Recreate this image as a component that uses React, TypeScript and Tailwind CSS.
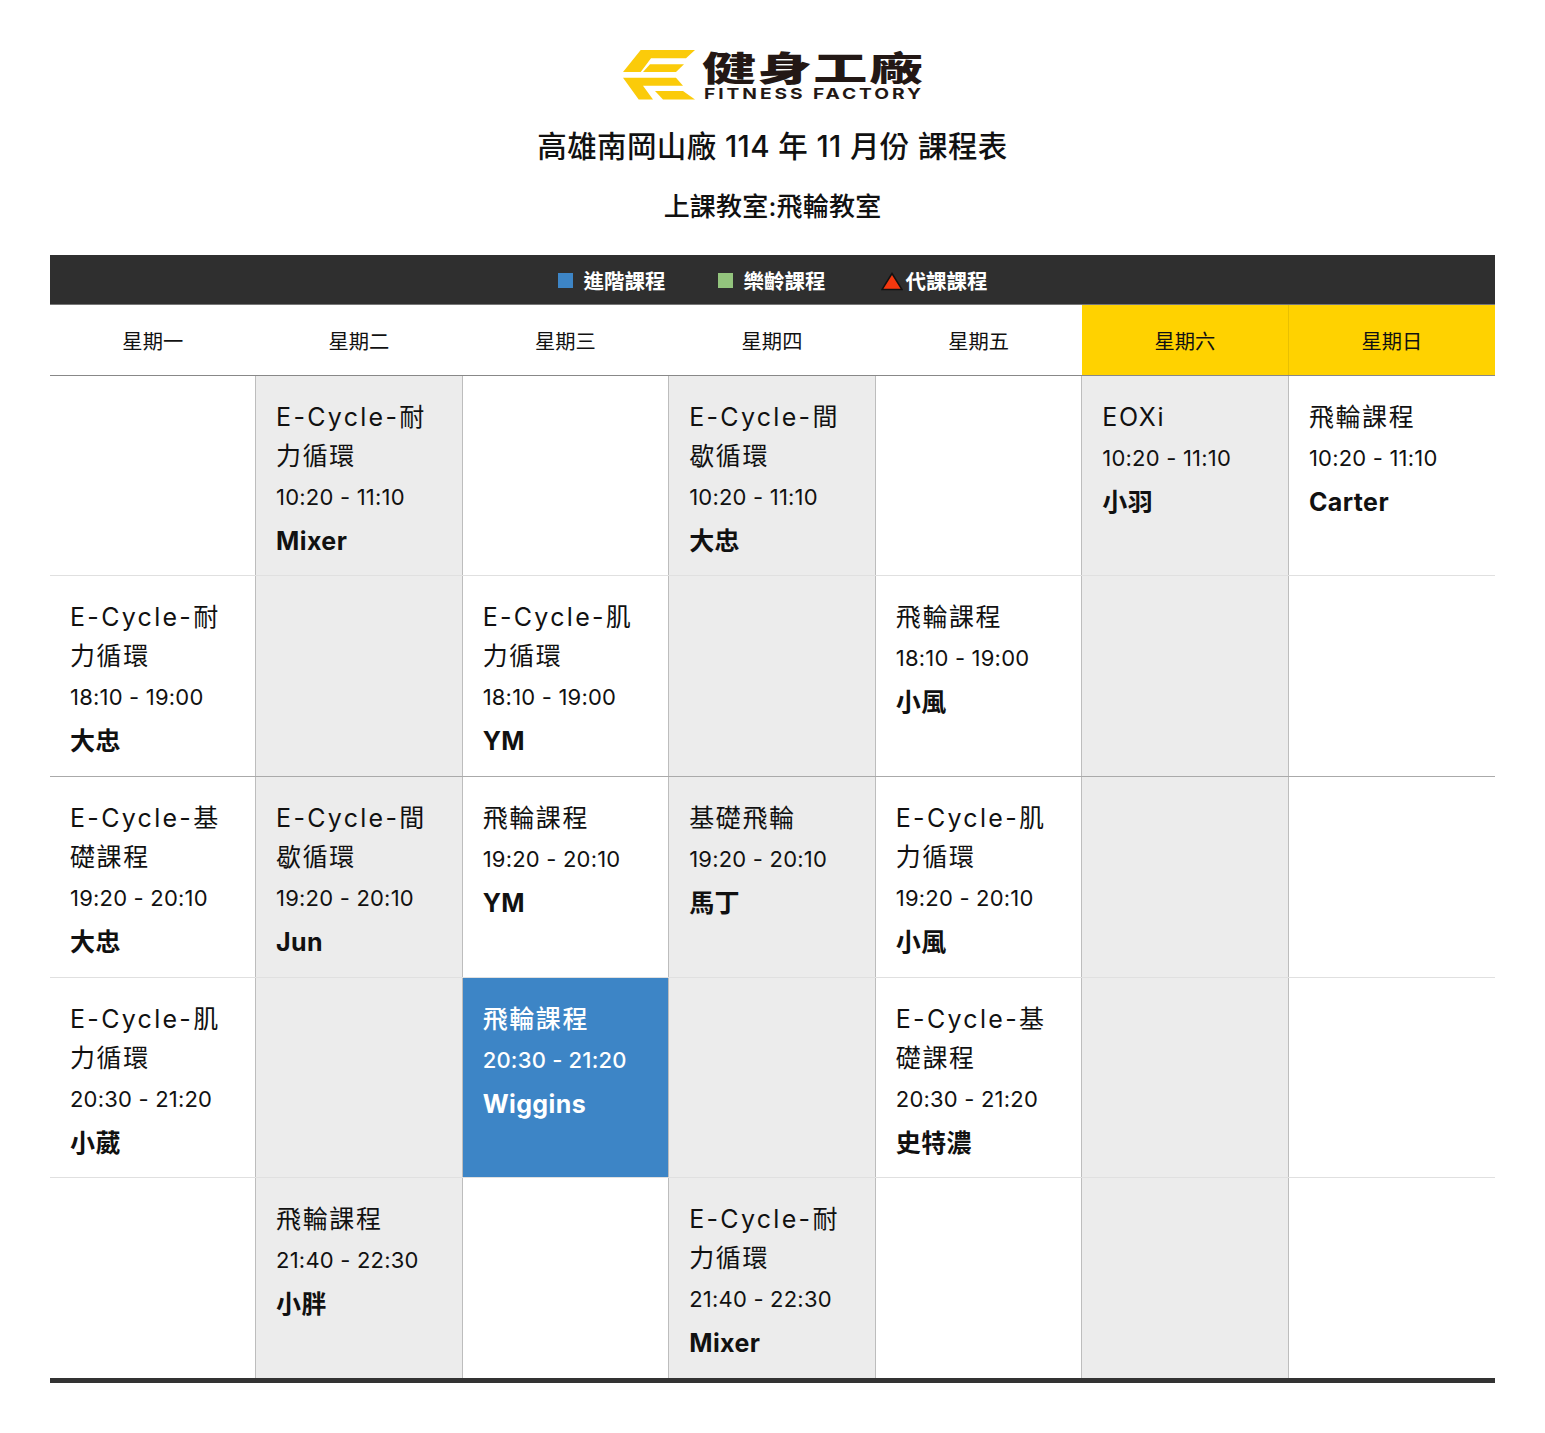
const F = "font-['Inter','Noto_Sans_CJK_TC',sans-serif]";

type C = { t: string; h: string; n: string; blue?: boolean } | null;

const rows: C[][] = [
  [null, { t: "E-Cycle-耐力循環", h: "10:20 - 11:10", n: "Mixer" }, null, { t: "E-Cycle-間歇循環", h: "10:20 - 11:10", n: "大忠" }, null, { t: "EOXi", h: "10:20 - 11:10", n: "小羽" }, { t: "飛輪課程", h: "10:20 - 11:10", n: "Carter" }],
  [{ t: "E-Cycle-耐力循環", h: "18:10 - 19:00", n: "大忠" }, null, { t: "E-Cycle-肌力循環", h: "18:10 - 19:00", n: "YM" }, null, { t: "飛輪課程", h: "18:10 - 19:00", n: "小風" }, null, null],
  [{ t: "E-Cycle-基礎課程", h: "19:20 - 20:10", n: "大忠" }, { t: "E-Cycle-間歇循環", h: "19:20 - 20:10", n: "Jun" }, { t: "飛輪課程", h: "19:20 - 20:10", n: "YM" }, { t: "基礎飛輪", h: "19:20 - 20:10", n: "馬丁" }, { t: "E-Cycle-肌力循環", h: "19:20 - 20:10", n: "小風" }, null, null],
  [{ t: "E-Cycle-肌力循環", h: "20:30 - 21:20", n: "小葳" }, null, { t: "飛輪課程", h: "20:30 - 21:20", n: "Wiggins", blue: true }, null, { t: "E-Cycle-基礎課程", h: "20:30 - 21:20", n: "史特濃" }, null, null],
  [null, { t: "飛輪課程", h: "21:40 - 22:30", n: "小胖" }, null, { t: "E-Cycle-耐力循環", h: "21:40 - 22:30", n: "Mixer" }, null, null, null],
];

const days = ["星期一", "星期二", "星期三", "星期四", "星期五", "星期六", "星期日"];

function Logo() {
  return (
    <div className="flex items-center gap-[7px] h-[52px]">
      <svg width="72" height="50" viewBox="0 0 72 50">
        <path d="M17.7 0H72L63 8.3H28L17.7 22H0Z" fill="#fbcb0a" />
        <path d="M27 14.3H61L53 22H20Z" fill="#fbcb0a" />
        <path d="M0 27.7H53L60 35.7H20L30 49.5H15.7Z" fill="#fbcb0a" />
        <path d="M32 41H60L72 49.5H40Z" fill="#fbcb0a" />
      </svg>
      <div className="flex flex-col items-start w-[220px] text-[#231815]">
        <span className="text-[34px] leading-[35px] font-black tracking-[1px] whitespace-nowrap origin-left scale-x-[1.59] font-['Noto_Sans_CJK_TC',sans-serif]">健身工廠</span>
        <span className="mt-[2px] text-[15px] leading-[16px] font-bold tracking-[2.3px] whitespace-nowrap origin-left scale-x-[1.28] ml-[2px] font-['Inter',sans-serif]">FITNESS FACTORY</span>
      </div>
    </div>
  );
}

function Title({ text }: { text: string }) {
  const isCycle = text.startsWith("E-Cycle-");
  return (
    <div className="text-[25px] leading-[39px] tracking-[1.6px]">
      {isCycle ? (
        <>
          <div className="whitespace-nowrap">
            <span className="tracking-[2.3px]">E-Cycle-</span>
            {text.slice(8, 9)}
          </div>
          <div>{text.slice(9)}</div>
        </>
      ) : (
        text
      )}
    </div>
  );
}

export default function App() {
  return (
    <div className={`${F} bg-white min-h-[1433px] w-[1545px] text-[#111] px-[50px] pt-[49px]`}>
      <div className="flex flex-col items-center">
        <Logo />
        <h1 className="mt-[22px] text-[29.5px] leading-[46px] font-medium tracking-[0.4px]">高雄南岡山廠 114 年 11 月份 課程表</h1>
        <h2 className="mt-[15px] text-[26px] leading-[46px] font-medium tracking-[0.2px]">上課教室:飛輪教室</h2>
      </div>
      <table className="mt-[25px] w-[1445px] table-fixed border-collapse">
        <colgroup>
          <col className="w-[205.6px]" />
          <col className="w-[206.57px]" />
          <col className="w-[206.57px]" />
          <col className="w-[206.57px]" />
          <col className="w-[206.57px]" />
          <col className="w-[206.57px]" />
          <col className="w-[206.52px]" />
        </colgroup>
        <thead>
          <tr>
            <th colSpan={7} className="h-[49px] bg-[#2f2f2f] p-0 pt-[7px] border-b border-[#777]">
              <div className="flex items-center justify-center text-white text-[20.5px] font-semibold">
                <span className="w-[15px] h-[15px] bg-[#3d85c6] mr-[11px] mb-[5px]" />
                <span>進階課程</span>
                <span className="w-[15px] h-[15px] bg-[#93c47d] ml-[52px] mr-[11px] mb-[5px]" />
                <span>樂齡課程</span>
                <svg width="22" height="19" viewBox="0 0 22 19" className="ml-[55px] mr-[3px] mb-[2px]">
                  <path d="M11 1.5L21 17.5H1Z" fill="#f4380f" stroke="#111" strokeWidth="1.5" />
                </svg>
                <span>代課課程</span>
              </div>
            </th>
          </tr>
          <tr className="h-[71px]">
            {days.map((d, i) => (
              <th key={d} className={`p-0 pt-[6px] text-[20.3px] font-normal border-b border-[#888] ${i > 4 ? "bg-[#ffd200]" : ""} ${i === 6 ? "border-l border-l-[#e8c000]" : ""}`}>
                {d}
              </th>
            ))}
          </tr>
        </thead>
        <tbody>
          {rows.map((r, ri) => (
            <tr key={ri} className="h-[200.7px]">
              {r.map((c, ci) => (
                <td
                  key={ci}
                  className={`align-top p-0 pl-[20px] pr-[20px] pt-[22px] border-b ${ri === 1 ? "border-b-[#aaaaaa]" : "border-b-[#e0e0e0]"} ${ri === 4 ? "border-b-0" : ""} ${ci % 2 === 1 ? "bg-[#ececec] border-x border-x-[#bdbdbd]" : ""} ${c?.blue ? "bg-[#3d85c6] text-white font-medium" : ""}`}
                >
                  {c && (
                    <>
                      <Title text={c.t} />
                      <div className="text-[22px] leading-[42px] tracking-[0.2px]">{c.h}</div>
                      <div className="text-[25px] leading-[46px] font-bold tracking-[0.4px]">{c.n}</div>
                    </>
                  )}
                </td>
              ))}
            </tr>
          ))}
        </tbody>
      </table>
      <div className="w-[1445px] h-[5px] bg-[#333]" />
    </div>
  );
}
